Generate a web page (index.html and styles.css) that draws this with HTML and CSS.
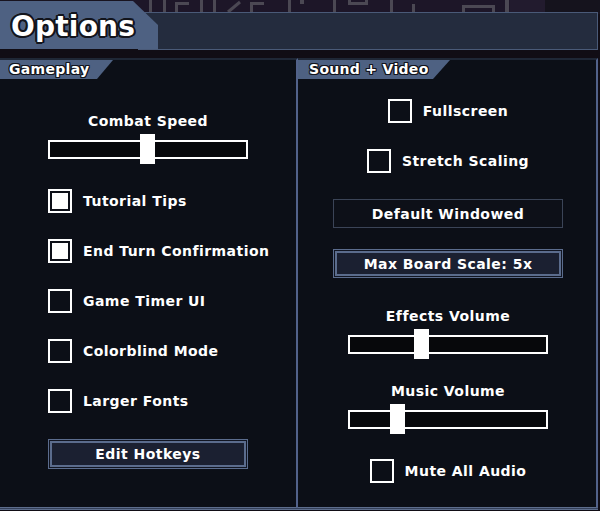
FILE: index.html
```html
<!DOCTYPE html>
<html>
<head>
<meta charset="utf-8">
<title>Options</title>
<link rel="stylesheet" href="styles.css">
</head>
<body>
<div class="screen">
  <header class="top">
    <svg class="decor" width="600" height="14" viewBox="0 0 600 14" aria-hidden="true">
      <rect width="600" height="14" fill="#18131f"/>
      <rect x="130" width="380" height="14" fill="#1d1628"/>
      <g fill="#4b4853">
        <rect x="149" y="0" width="3" height="12"/>
        <rect x="163" y="0" width="3" height="12"/>
        <rect x="175" y="2" width="14" height="3"/>
        <rect x="175" y="2" width="3" height="10"/>
        <rect x="200" y="0" width="3" height="12"/>
        <rect x="213" y="0" width="3" height="12"/>
        <rect x="250" y="2" width="14" height="3"/>
        <rect x="250" y="2" width="3" height="10"/>
        <rect x="288" y="0" width="3" height="12"/>
        <rect x="300" y="0" width="4" height="4"/>
        <rect x="333" y="0" width="3" height="12"/>
        <rect x="348" y="0" width="3" height="4"/>
        <rect x="348" y="2" width="20" height="3"/>
        <rect x="365" y="0" width="3" height="4"/>
        <rect x="390" y="0" width="3" height="12"/>
        <rect x="412" y="4" width="3" height="8"/>
        <rect x="462" y="5" width="33" height="3"/>
        <rect x="462" y="5" width="3" height="7"/>
        <rect x="492" y="5" width="3" height="7"/>
        <rect x="505" y="0" width="4" height="12"/>
      </g>
      <path d="M228 12 L240 2" stroke="#4b4853" stroke-width="3"/>
      <rect x="510" width="35" height="12" fill="#221b2e"/>
      <rect x="545" width="55" height="12" fill="#15131d"/>
    </svg>
    <div class="title-tab"><h1 class="title">Options</h1></div>
    <div class="title-bar"></div>
  </header>

  <div class="panels">
    <section class="panel panel-left">
      <div class="tab tab-left">Gameplay</div>
      <div class="body body-left">
        <div class="label label-first">Combat Speed</div>
        <div class="slider"><div class="track"><div class="thumb" style="margin-left:90px"></div></div></div>
        <div class="row row-first"><span class="check on"></span><span class="text">Tutorial Tips</span></div>
        <div class="row"><span class="check on"></span><span class="text">End Turn Confirmation</span></div>
        <div class="row"><span class="check"></span><span class="text">Game Timer UI</span></div>
        <div class="row"><span class="check"></span><span class="text">Colorblind Mode</span></div>
        <div class="row"><span class="check"></span><span class="text">Larger Fonts</span></div>
        <div class="btn btn-hotkeys">Edit Hotkeys</div>
      </div>
    </section>

    <section class="panel panel-right">
      <div class="tab tab-right">Sound + Video</div>
      <div class="body body-right">
        <div class="row row-full"><span class="check"></span><span class="text">Fullscreen</span></div>
        <div class="row"><span class="check"></span><span class="text">Stretch Scaling</span></div>
        <div class="btn-flat">Default Windowed</div>
        <div class="btn btn-scale">Max Board Scale: 5x</div>
        <div class="label label-effects">Effects Volume</div>
        <div class="slider"><div class="track"><div class="thumb" style="margin-left:64px"></div></div></div>
        <div class="label label-music">Music Volume</div>
        <div class="slider"><div class="track"><div class="thumb" style="margin-left:40px"></div></div></div>
        <div class="row row-mute"><span class="check"></span><span class="text">Mute All Audio</span></div>
      </div>
    </section>
  </div>
</div>
</body>
</html>
```
FILE: styles.css
```css
* { box-sizing: border-box; }

html, body {
  margin: 0;
  padding: 0;
}

body {
  width: 600px;
  height: 511px;
  overflow: hidden;
  background: #110d15;
  color: #ffffff;
  font-family: "DejaVu Sans", "Liberation Sans", sans-serif;
  font-weight: bold;
}

.screen {
  width: 598px;
}

/* ---------- header ---------- */
.top {
  position: relative;
  height: 50px;
  display: flex;
  align-items: flex-start;
}

.decor {
  position: absolute;
  left: 0;
  top: 0;
}

.title-tab {
  position: relative;
  z-index: 1;
  flex: 0 0 158px;
  height: 49px;
  background: #4e6182;
  clip-path: polygon(0 1px, 133px 1px, 158px 25px, 158px 100%, 0 100%);
  padding: 11px 0 0 11px;
}

.title {
  margin: 0;
  font-size: 28px;
  line-height: 32px;
  font-weight: bold;
  letter-spacing: 0.2px;
  white-space: nowrap;
  text-shadow:
    -2px 0 #12141c, 2px 0 #12141c, 0 -2px #12141c, 0 2px #12141c,
    -1px -1px #12141c, 1px -1px #12141c, -1px 1px #12141c, 1px 1px #12141c,
    -2px -1px #12141c, 2px 1px #12141c, -1px 2px #12141c, 1px -2px #12141c;
}

.title-bar {
  position: relative;
  flex: 1;
  margin-left: -20px;
  margin-top: 12px;
  height: 38px;
  background: #242c3e;
  border: 1px solid #4a5a78;
  border-left: none;
}

/* ---------- panels ---------- */
.panels {
  display: flex;
  margin-top: 8px;
}

.panel {
  height: 450px;
  background: #0c0f17;
  border-top: 2px solid #1f2736;
  border-bottom: 1px solid #5d6d8c;
  box-shadow: 0 1px 0 #34405a, 0 2px 0 #5d6d8c;
}

.panel-left {
  width: 298px;
  border-right: 2px solid #52628a;
}

.panel-right {
  width: 300px;
  padding-left: 2px;
  border-right: 2px solid #52628a;
}

.tab {
  height: 19px;
  line-height: 19px;
  font-size: 14px;
  letter-spacing: 0.3px;
  white-space: nowrap;
  background: #4e6182;
  text-shadow:
    -1px 0 #12141c, 1px 0 #12141c, 0 -1px #12141c, 0 1px #12141c,
    -1px -1px #12141c, 1px -1px #12141c, -1px 1px #12141c, 1px 1px #12141c;
}

.tab-left {
  width: 113px;
  padding-left: 9px;
  clip-path: polygon(0 0, 113px 0, 97px 100%, 0 100%);
}

.tab-right {
  width: 152px;
  margin-left: -2px;
  padding-left: 11px;
  clip-path: polygon(0 0, 152px 0, 135px 100%, 0 100%);
}

.body {
  display: flex;
  flex-direction: column;
}

.body-left {
  padding-left: 48px;
  align-items: flex-start;
}

.body-right {
  align-items: center;
}

/* ---------- text ---------- */
.label {
  width: 200px;
  font-size: 14px;
  line-height: 16px;
  letter-spacing: 0.45px;
  text-align: center;
  white-space: nowrap;
}

.label-first { margin-top: 34px; }
.label-effects { margin-top: 30px; }
.label-music { margin-top: 24px; }

.text {
  font-size: 14px;
  line-height: 16px;
  letter-spacing: 0.45px;
  white-space: nowrap;
}

/* ---------- sliders ---------- */
.slider {
  margin-top: 5px;
  width: 200px;
  height: 30px;
  display: flex;
  align-items: center;
}

.track {
  width: 200px;
  height: 19px;
  border: 2px solid #ffffff;
  background: #07080b;
  display: flex;
  align-items: center;
}

.thumb {
  flex: 0 0 15px;
  width: 15px;
  height: 30px;
  background: #ffffff;
}

/* ---------- checkboxes ---------- */
.row {
  display: flex;
  align-items: center;
  gap: 11px;
  height: 24px;
  margin-top: 26px;
}

.row-first { margin-top: 25px; }
.row-full { margin-top: 20px; }
.row-mute { margin-top: 25px; }

.check {
  flex: 0 0 24px;
  width: 24px;
  height: 24px;
  border: 2px solid #ffffff;
  padding: 2px;
}

.check.on::after {
  content: "";
  display: block;
  width: 100%;
  height: 100%;
  background: #ffffff;
}

/* ---------- buttons ---------- */
.btn {
  display: flex;
  align-items: center;
  justify-content: center;
  border: 1px solid #5b6c8d;
  box-shadow: inset 0 0 0 1px #111522, inset 0 0 0 3px #5b6c8d;
  background: #1b2031;
  font-size: 14px;
  letter-spacing: 0.45px;
  white-space: nowrap;
}

.btn-hotkeys {
  width: 200px;
  height: 30px;
  margin-top: 26px;
}

.btn-scale {
  width: 230px;
  height: 29px;
  margin-top: 21px;
}

.btn-flat {
  display: flex;
  align-items: center;
  justify-content: center;
  width: 230px;
  height: 29px;
  margin-top: 26px;
  border: 1px solid #3b4457;
  background: #0d1018;
  font-size: 14px;
  letter-spacing: 0.45px;
  white-space: nowrap;
}
```
